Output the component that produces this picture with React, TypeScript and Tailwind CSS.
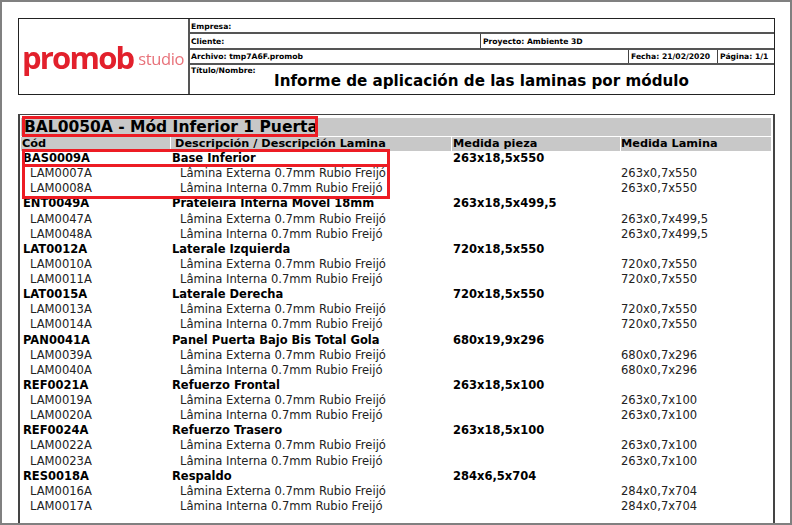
const font = { fontFamily: '"DejaVu Sans", Verdana, sans-serif' };

type Part = { code: string; desc: string; size: string; parts: [string, string, string][] };

const ext = "Lâmina Externa 0.7mm Rubio Freijó";
const int = "Lâmina Interna 0.7mm Rubio Freijó";

const groups: Part[] = [
  { code: "BAS0009A", desc: "Base Inferior", size: "263x18,5x550", parts: [["LAM0007A", ext, "263x0,7x550"], ["LAM0008A", int, "263x0,7x550"]] },
  { code: "ENT0049A", desc: "Prateleira Interna Móvel 18mm", size: "263x18,5x499,5", parts: [["LAM0047A", ext, "263x0,7x499,5"], ["LAM0048A", int, "263x0,7x499,5"]] },
  { code: "LAT0012A", desc: "Laterale Izquierda", size: "720x18,5x550", parts: [["LAM0010A", ext, "720x0,7x550"], ["LAM0011A", int, "720x0,7x550"]] },
  { code: "LAT0015A", desc: "Laterale Derecha", size: "720x18,5x550", parts: [["LAM0013A", ext, "720x0,7x550"], ["LAM0014A", int, "720x0,7x550"]] },
  { code: "PAN0041A", desc: "Panel Puerta Bajo Bis Total Gola", size: "680x19,9x296", parts: [["LAM0039A", ext, "680x0,7x296"], ["LAM0040A", int, "680x0,7x296"]] },
  { code: "REF0021A", desc: "Refuerzo Frontal", size: "263x18,5x100", parts: [["LAM0019A", ext, "263x0,7x100"], ["LAM0020A", int, "263x0,7x100"]] },
  { code: "REF0024A", desc: "Refuerzo Trasero", size: "263x18,5x100", parts: [["LAM0022A", ext, "263x0,7x100"], ["LAM0023A", int, "263x0,7x100"]] },
  { code: "RES0018A", desc: "Respaldo", size: "284x6,5x704", parts: [["LAM0016A", ext, "284x0,7x704"], ["LAM0017A", int, "284x0,7x704"]] },
];

function App() {
  return (
    <div style={font} className="relative w-[792px] h-[525px] overflow-hidden bg-white text-black border-2 border-[#808080] pt-[16px] pl-[16px]">
      <div className="flex w-[757px] h-[77px] border border-[#222]">
        <div className="flex w-[171px] items-center border-r-2 border-[#555] pl-[3px] pt-[2px]">
          <span className="text-[31px] font-bold leading-none tracking-[-1.8px] text-[#e2202c] blur-[0.4px] [font-family:'Open_Sans',sans-serif]">promob</span>
          <span className="ml-[5px] pt-[3px] text-[16.5px] leading-none tracking-[-0.4px] text-[#e8727a] blur-[0.4px] [font-family:'Open_Sans',sans-serif]">studio</span>
        </div>
        <div className="flex flex-1 flex-col text-[7.65px] font-bold leading-none">
          <div className="flex h-[15px] items-center border-b-2 border-[#555] pl-[1px] pt-[2px]">Empresa:</div>
          <div className="flex h-[16px] border-b-2 border-[#555]">
            <div className="flex w-[291px] items-center border-r border-[#444] pl-[1px] pt-[1px]">Cliente:</div>
            <div className="flex items-center pl-[2px] pt-[1px]">Proyecto: Ambiente 3D</div>
          </div>
          <div className="flex h-[15px] border-b-2 border-[#555]">
            <div className="flex w-[439px] items-center border-r border-[#444] pl-[1px] pt-[1px]">Archivo: tmp7A6F.promob</div>
            <div className="flex w-[89px] items-center border-r border-[#444] pl-[2px] pt-[1px]">Fecha: 21/02/2020</div>
            <div className="flex items-center pl-[2px] pt-[1px]">Página: 1/1</div>
          </div>
          <div className="flex-1 pl-[1px] pt-[2px]">
            <div>Título/Nombre:</div>
            <div className="pl-[83px] text-[15.15px] leading-[12px]">Informe de aplicación de las laminas por módulo</div>
          </div>
        </div>
      </div>

      <div className="mt-[19px] h-[440px] w-[757px] border-t border-l-2 border-r-2 border-[#444] pt-[3px] pl-[1px] pr-[2px]">
        <div className="h-[18px] bg-[#c8c8c8] pl-[3px] text-[15.5px] font-bold leading-[18px]">BAL0050A - Mód Inferior 1 Puerta</div>
        <div className="mt-[1px] flex h-[14px] gap-[1px] text-[11.3px] font-bold leading-[14px]">
          <div className="w-[149px] bg-[#c8c8c8] pl-[1px]">Cód</div>
          <div className="w-[280px] bg-[#c8c8c8] pl-[4px]">Descripción / Descripción Lamina</div>
          <div className="w-[168px] bg-[#c8c8c8] pl-[1px]">Medida pieza</div>
          <div className="flex-1 bg-[#c8c8c8]">Medida Lamina</div>
        </div>
        <div className="text-[11.55px] leading-[15.13px]">
          {groups.map((g) => (
            <div key={g.code}>
              <div className="flex text-[11.5px] font-bold">
                <div className="w-[151px] pl-[2px]">{g.code}</div>
                <div className="w-[281px]">{g.desc}</div>
                <div>{g.size}</div>
              </div>
              {g.parts.map((p) => (
                <div key={p[0]} className="flex text-[#222]">
                  <div className="w-[159px] pl-[9px]">{p[0]}</div>
                  <div className="w-[441px]">{p[1]}</div>
                  <div>{p[2]}</div>
                </div>
              ))}
            </div>
          ))}
        </div>
      </div>

      <div className="absolute left-[20px] top-[114px] h-[21px] w-[296px] border-[3px] border-[#ed1c24]" />
      <div className="absolute left-[20px] top-[147px] h-[18px] w-[368px] border-[3px] border-[#ed1c24]" />
      <div className="absolute left-[20px] top-[162px] h-[35px] w-[368px] border-[3px] border-[#ed1c24]" />
    </div>
  );
}

export default App;
